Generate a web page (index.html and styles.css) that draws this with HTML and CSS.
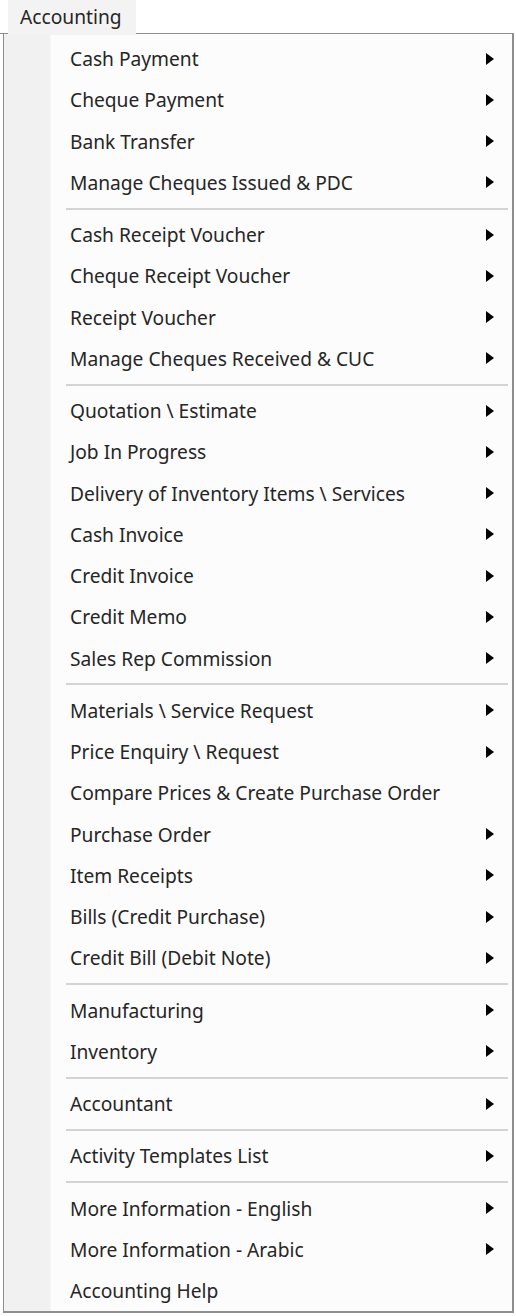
FILE: index.html
```html
<!DOCTYPE html>
<html>
<head>
<meta charset="utf-8">
<link rel="stylesheet" href="styles.css">
</head>
<body>
<div class="bar">
  <div class="tab">Accounting</div>
</div>
<div class="menu">
  <div class="item">Cash Payment<span class="arrow"></span></div>
  <div class="item">Cheque Payment<span class="arrow"></span></div>
  <div class="item">Bank Transfer<span class="arrow"></span></div>
  <div class="item">Manage Cheques Issued &amp; PDC<span class="arrow"></span></div>
  <div class="sep"></div>
  <div class="item">Cash Receipt Voucher<span class="arrow"></span></div>
  <div class="item">Cheque Receipt Voucher<span class="arrow"></span></div>
  <div class="item">Receipt Voucher<span class="arrow"></span></div>
  <div class="item">Manage Cheques Received &amp; CUC<span class="arrow"></span></div>
  <div class="sep"></div>
  <div class="item">Quotation \ Estimate<span class="arrow"></span></div>
  <div class="item">Job In Progress<span class="arrow"></span></div>
  <div class="item">Delivery of Inventory Items \ Services<span class="arrow"></span></div>
  <div class="item">Cash Invoice<span class="arrow"></span></div>
  <div class="item">Credit Invoice<span class="arrow"></span></div>
  <div class="item">Credit Memo<span class="arrow"></span></div>
  <div class="item">Sales Rep Commission<span class="arrow"></span></div>
  <div class="sep"></div>
  <div class="item">Materials \ Service Request<span class="arrow"></span></div>
  <div class="item">Price Enquiry \ Request<span class="arrow"></span></div>
  <div class="item">Compare Prices &amp; Create Purchase Order</div>
  <div class="item">Purchase Order<span class="arrow"></span></div>
  <div class="item">Item Receipts<span class="arrow"></span></div>
  <div class="item">Bills (Credit Purchase)<span class="arrow"></span></div>
  <div class="item">Credit Bill (Debit Note)<span class="arrow"></span></div>
  <div class="sep"></div>
  <div class="item">Manufacturing<span class="arrow"></span></div>
  <div class="item">Inventory<span class="arrow"></span></div>
  <div class="sep"></div>
  <div class="item">Accountant<span class="arrow"></span></div>
  <div class="sep"></div>
  <div class="item">Activity Templates List<span class="arrow"></span></div>
  <div class="sep"></div>
  <div class="item">More Information - English<span class="arrow"></span></div>
  <div class="item">More Information - Arabic<span class="arrow"></span></div>
  <div class="item">Accounting Help</div>
</div>
</body>
</html>
```
FILE: styles.css
```css
html, body {
  margin: 0;
  padding: 0;
  background: #ffffff;
}
body {
  font-family: "Noto Sans", "Open Sans", sans-serif;
  font-size: 19.2px;
  color: #262626;
  width: 516px;
}
.bar {
  position: relative;
  height: 33px;
}
.bar::before {
  content: "";
  position: absolute;
  left: 0;
  top: 33px;
  width: 4px;
  height: 1px;
  background: #8e8e8e;
}
.tab {
  position: relative;
  z-index: 1;
  margin-left: 8px;
  width: 128px;
  height: 35px;
  box-sizing: border-box;
  padding-left: 12px;
  line-height: 34px;
  background: #f3f3f3;
}
.menu {
  margin-left: 3px;
  width: 511px;
  box-sizing: border-box;
  border: 1px solid #8e8e8e;
  border-right-width: 2px;
  border-bottom-width: 2px;
  padding: 4px 1px 0 1px;
  background: linear-gradient(to right, #f1f1f1 0, #f1f1f1 46px, #fcfcfc 47px, #fcfcfc 100%);
}
.item {
  height: 41.25px;
  display: flex;
  align-items: center;
  justify-content: space-between;
  padding-left: 65px;
  padding-right: 17px;
  white-space: nowrap;
}
.arrow {
  width: 0;
  height: 0;
  border-top: 6px solid transparent;
  border-bottom: 6px solid transparent;
  border-left: 8px solid #000000;
}
.sep {
  height: 11px;
  display: flex;
  align-items: center;
  padding-left: 61px;
  padding-right: 3px;
}
.sep::before {
  content: "";
  flex: 1;
  height: 2px;
  background: #d4d4d4;
}
```
